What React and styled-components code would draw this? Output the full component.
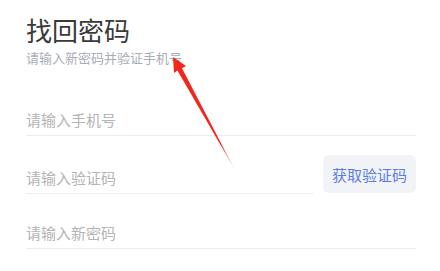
import styled, { createGlobalStyle } from 'styled-components';

const GlobalStyle = createGlobalStyle`
	* { box-sizing: border-box; }
	body {
		margin: 0;
		background: #fff;
		font-family: "Noto Sans CJK SC", "Noto Sans", sans-serif;
	}
`;

const Page = styled.div`
	position: relative;
	width: 440px;
	height: 271px;
	padding: 13px 24px 0 26px;
	overflow: hidden;
`;

const Title = styled.h1`
	margin: 0;
	font-size: 26px;
	line-height: 34px;
	font-weight: 400;
	color: #3a3a3a;
`;

const SubTitle = styled.p`
	margin: 2px 0 0;
	font-size: 13px;
	line-height: 18px;
	color: #a9adb5;
`;

const Form = styled.div`
	display: flex;
	flex-direction: column;
	margin-top: 40px;
`;

const Row = styled.div`
	display: flex;
	align-items: flex-end;
	gap: 10px;
	margin-top: ${(props) => props.$top || 0}px;
`;

const Field = styled.input`
	flex: 1;
	min-width: 0;
	height: 29px;
	padding: 0 0 3px;
	border: none;
	border-bottom: 1px solid #ececf0;
	outline: none;
	background: transparent;
	font-family: inherit;
	font-size: 15px;
	line-height: 25px;
	color: #333;

	&::placeholder {
		color: #b4b4b4;
	}
`;

const CodeButton = styled.button`
	width: 93px;
	height: 38px;
	margin-bottom: 1px;
	padding: 0;
	border: none;
	border-radius: 6px;
	background: #f2f3f6;
	font-family: inherit;
	font-size: 15px;
	color: #5b7ee6;
	cursor: pointer;
`;

const Arrow = styled.svg`
	position: absolute;
	left: 0;
	top: 0;
	pointer-events: none;
`;

const App = () => {
	return (
		<>
			<GlobalStyle />
			<Page>
				<Title>找回密码</Title>
				<SubTitle>请输入新密码并验证手机号</SubTitle>
				<Form>
					<Row>
						<Field placeholder="请输入手机号" />
					</Row>
					<Row $top={19}>
						<Field placeholder="请输入验证码" />
						<CodeButton>获取验证码</CodeButton>
					</Row>
					<Row $top={26}>
						<Field type="password" placeholder="请输入新密码" />
					</Row>
				</Form>
				{/* red annotation arrow pointing at the subtitle */}
				<Arrow width="440" height="271" viewBox="0 0 440 271">
					<defs>
						<linearGradient id="tail" x1="173" y1="57" x2="235" y2="170" gradientUnits="userSpaceOnUse">
							<stop offset="0.75" stopColor="#f2261c" />
							<stop offset="1" stopColor="#f2261c" stopOpacity="0.2" />
						</linearGradient>
					</defs>
					<polygon
						points="173,57 186,66 182,68.3 235,170 177.4,70.6 174,73"
						fill="url(#tail)"
					/>
				</Arrow>
			</Page>
		</>
	);
};

export default App;
